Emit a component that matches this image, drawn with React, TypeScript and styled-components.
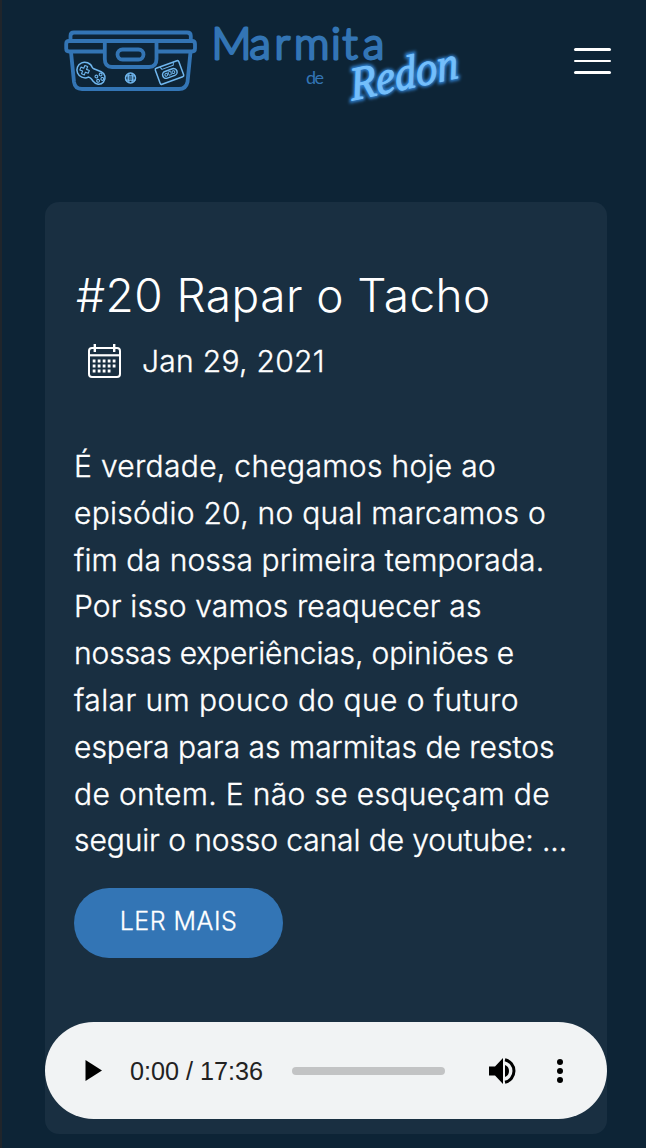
import React from "react";
import styled, { createGlobalStyle } from "styled-components";

const GlobalStyle = createGlobalStyle`
  * { box-sizing: border-box; }
  html, body { margin: 0; background: #0d2436; }
  body { font-family: Inter, "Liberation Sans", sans-serif; color: #fff; }
`;

const Page = styled.div`
  width: 646px;
  height: 1148px;
  overflow: hidden;
  border-left: 2px solid #20252b;
  background: #0d2436;
`;

const Header = styled.header`
  display: flex;
  justify-content: space-between;
  align-items: flex-start;
  height: 202px;
  padding: 0 35px 0 53px;
`;

const Logo = styled.a`
  display: block;
  width: 430px;
  height: 130px;
`;

const MenuButton = styled.button`
  display: flex;
  flex-direction: column;
  justify-content: space-between;
  width: 37px;
  height: 26px;
  margin-top: 48px;
  padding: 0;
  border: 0;
  background: none;
`;

const MenuBar = styled.span`
  height: 2.6px;
  border-radius: 2px;
  background: #fff;
`;

const Card = styled.article`
  display: flex;
  flex-direction: column;
  width: 562px;
  height: 932px;
  margin-left: 43px;
  padding-top: 64px;
  border-radius: 14px;
  background: #192f41;
`;

const Title = styled.h2`
  margin: 0 0 0 31px;
  font-size: 46px;
  line-height: 58px;
  font-weight: 300;
  white-space: nowrap;
  letter-spacing: 0.45px;
`;

const DateRow = styled.div`
  display: flex;
  align-items: center;
  gap: 20px;
  height: 34px;
  margin: 20px 0 0 42px;
  font-size: 30px;
  line-height: 34px;
  font-weight: 300;
  -webkit-text-stroke: 0.35px #fff;
`;

const DateText = styled.time`
  letter-spacing: 0.3px;
  white-space: nowrap;
  padding-bottom: 1px;
`;

const Summary = styled.p`
  margin: 65px 0 0 29px;
  font-size: 30px;
  line-height: 46.8px;
  font-weight: 300;
  -webkit-text-stroke: 0.35px #fff;
`;

const Line = styled.span<{ $tracking: number }>`
  display: block;
  width: max-content;
  white-space: nowrap;
  letter-spacing: ${(p) => p.$tracking}px;
`;

const ReadMore = styled.a`
  display: flex;
  justify-content: center;
  align-items: center;
  width: 209px;
  height: 70px;
  margin: 23.5px 0 0 29px;
  padding-bottom: 4px;
  border-radius: 35px;
  background: #3375b5;
  font-size: 25px;
  font-weight: 300;
  letter-spacing: 0.5px;
  -webkit-text-stroke: 0.3px #fff;
`;

const Player = styled.div`
  display: flex;
  align-items: center;
  width: 562px;
  height: 97px;
  margin-top: auto;
  margin-bottom: 15px;
  padding: 0 44px 0 40px;
  border-radius: 49px;
  background: #f1f3f4;
  color: #222;
`;

const Time = styled.span`
  width: 133px;
  margin-left: 28px;
  font: 25.2px/30px "Liberation Sans", Arial, sans-serif;
  white-space: nowrap;
`;

const Track = styled.div`
  width: 153px;
  height: 8px;
  margin-left: 29px;
  margin-right: 44px;
  border-radius: 4px;
  background: #c2c3c4;
`;

const Dots = styled.div`
  display: flex;
  flex-direction: column;
  gap: 3px;
  margin-left: auto;
`;

const Dot = styled.i`
  width: 6px;
  height: 6px;
  border-radius: 50%;
  background: #000;
`;

const LogoArt = () => (
  <svg width="430" height="130" viewBox="55 0 430 130" fill="none">
    <defs>
      <filter id="glow" x="-20%" y="-40%" width="140%" height="180%">
        <feGaussianBlur stdDeviation="1.5" />
      </filter>
    </defs>
    <g stroke="#3375b5" strokeWidth="3.8" strokeLinejoin="round">
      <path d="M70.500 41V36Q70.500 32.500 74 32.500H187Q190.800 32.500 190.800 36V41" />
      <path d="M104 51.500H69Q66.200 51.500 66.200 48.500V44Q66.200 41 69 41H192Q195 41 195 44V48.500Q195 51.500 192 51.500H157" />
      <path d="M71 52L74 82Q75 89 82 89H179Q186 89 187.500 82L190.500 52" />
      <path d="M104.800 42V59Q104.800 67 112 67H149Q156.500 67 156.500 59V42" />
      <rect x="117.500" y="49.500" width="26" height="10" rx="5" />
    </g>
    <g stroke="#70b7ef" strokeWidth="1.5" strokeLinecap="round" strokeLinejoin="round">
      <g transform="translate(92 73.200) rotate(22)">
        <path d="M-8-8Q-4-8-2-5.500Q-1-4.800 0-4.800H8A6.500 6.500 0 1 1 4 7Q0 4.500-2 5Q-4 7.500-8 7.500A7.700 7.700 0 0 1-8-8Z" />
        <path d="M-9.500-4.500h3v3h3v3h-3v3h-3v-3h-3v-3h3Z" strokeWidth="1.100" />
        <g strokeWidth="1.100">
          <circle cx="8.500" cy="-2" r="1.400" /><circle cx="5.300" cy="1.400" r="1.400" />
          <circle cx="11.700" cy="1.400" r="1.400" /><circle cx="8.500" cy="4.800" r="1.400" />
        </g>
      </g>
      <circle cx="130.500" cy="78" r="5" />
      <path d="M126.500 75.800h8M126 80.200h9M129 74l-1 4 1 4M132 74l1 4-1 4M128 78h5" strokeWidth="1.200" />
      <g transform="translate(169.500 72.500) rotate(-20)">
        <rect x="-12.500" y="-8.500" width="25" height="17" rx="1.500" />
        <path d="M-7-8l1 2.500H6L7-8" strokeWidth="1" />
        <rect x="-7.500" y="-2.500" width="15" height="7" rx="3.500" />
        <circle cx="-3.800" cy="1" r="1.400" strokeWidth="1" /><circle cx="3.800" cy="1" r="1.400" strokeWidth="1" />
        <path d="M-1.300-.5v3h2.600v-3Z" strokeWidth=".8" />
      </g>
    </g>
    <g fill="#3375b5" stroke="#3375b5" strokeLinejoin="round" strokeLinecap="round" fontFamily="Lato, sans-serif">
      <text x="211.500 249.500 274.500 294 331 342.500 363" y="59" fontSize="44" fontWeight="300" strokeWidth="2.800">Marmita</text>
      <text x="306" y="84" fontSize="18" fontWeight="400" strokeWidth="0" textLength="18">de</text>
    </g>
    <g transform="translate(352 100.500) rotate(-12) skewX(-5)" fontFamily="Liberation Serif, serif" fontStyle="italic" fontSize="47">
      <text textLength="110" lengthAdjust="spacingAndGlyphs" fill="#2d80d0" stroke="#2d80d0" strokeWidth="4.500" filter="url(#glow)">Redon</text>
      <text textLength="110" lengthAdjust="spacingAndGlyphs" fill="#74bffb" stroke="#74bffb" strokeWidth="1" strokeLinejoin="round">Redon</text>
    </g>
  </svg>
);

const CalendarIcon = () => (
  <svg width="35" height="35" viewBox="0 0 35 35" fill="none" stroke="#fff" strokeWidth="2">
    <rect x="2" y="4" width="31" height="29" rx="3" />
    <path d="M2 11.300H33" strokeWidth="2.200" />
    <path d="M7.800 0V8M27.200 0V8" strokeWidth="2.400" />
    <path d="M5.700 17H30M5.700 22H30M5.700 27H25" strokeWidth="2.800" strokeDasharray="2.800 2.200" />
  </svg>
);

const PlayIcon = () => (
  <svg width="17" height="21" viewBox="0 0 17 21"><path d="M.5 0 17 10.500.5 21Z" /></svg>
);

const VolumeIcon = () => (
  <svg width="28" height="26" viewBox="0 0 28 26">
    <path d="M0 8.500H6L14 0V26L6 17.500H0Z" />
    <path d="M16 7A6.500 6.500 0 0 1 16 19Z" />
    <path d="M16 1.700A11.600 11.600 0 0 1 16 24.300" fill="none" stroke="#000" strokeWidth="3" />
  </svg>
);

const summary: [string, number][] = [
  ["É verdade, chegamos hoje ao", 0.31],
  ["episódio 20, no qual marcamos o", 0.27],
  ["fim da nossa primeira temporada.", 0.1],
  ["Por isso vamos reaquecer as", 0.15],
  ["nossas experiências, opiniões e", -0.15],
  ["falar um pouco do que o futuro", 0.41],
  ["espera para as marmitas de restos", 0],
  ["de ontem. E não se esqueçam de", 0.33],
  ["seguir o nosso canal de youtube: ...", -0.1],
];

export default function App() {
  return (
    <>
      <GlobalStyle />
      <Page>
        <Header>
          <Logo aria-label="Marmita de Redon"><LogoArt /></Logo>
          <MenuButton aria-label="Menu"><MenuBar /><MenuBar /><MenuBar /></MenuButton>
        </Header>
        <Card>
          <Title>#20 Rapar o Tacho</Title>
          <DateRow><CalendarIcon /><DateText>Jan 29, 2021</DateText></DateRow>
          <Summary>
            {summary.map(([text, tracking]) => (
              <Line key={text} $tracking={tracking}>{text}</Line>
            ))}
          </Summary>
          <ReadMore>LER MAIS</ReadMore>
          <Player>
            <PlayIcon />
            <Time>0:00 / 17:36</Time>
            <Track />
            <VolumeIcon />
            <Dots><Dot /><Dot /><Dot /></Dots>
          </Player>
        </Card>
      </Page>
    </>
  );
}
